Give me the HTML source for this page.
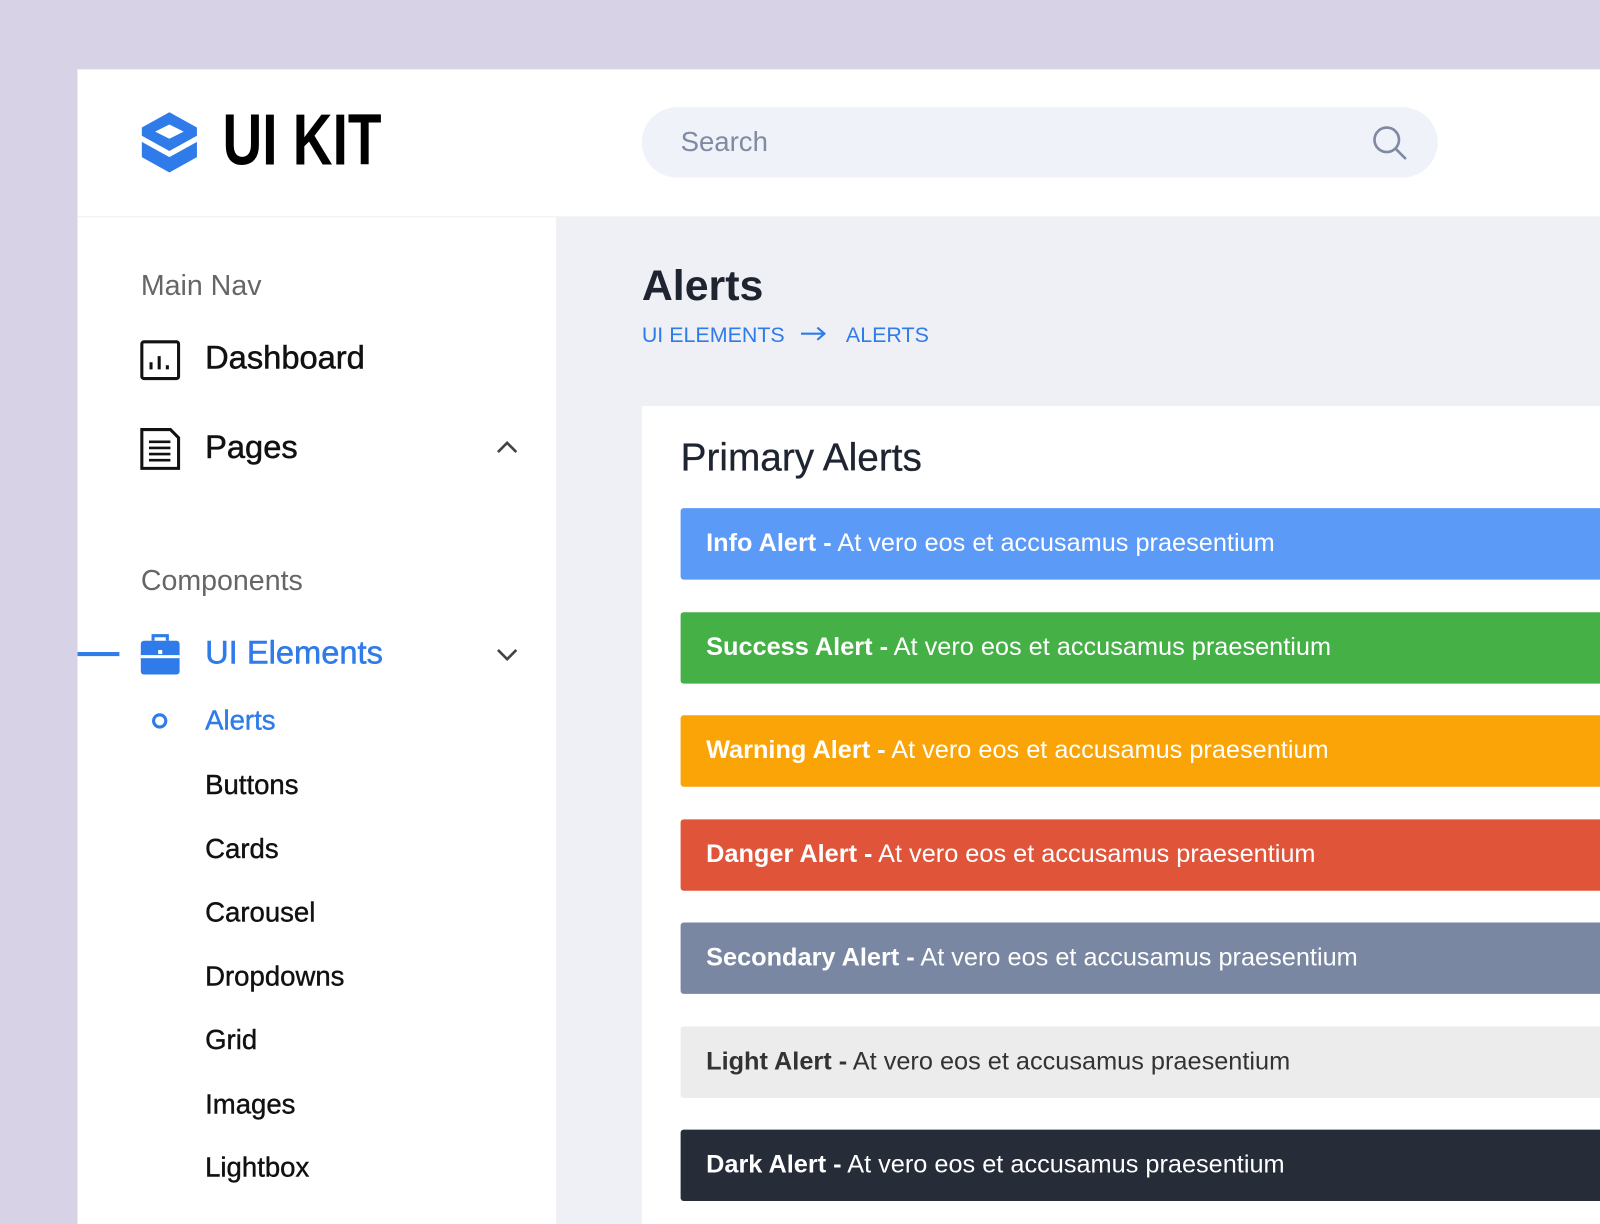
<!DOCTYPE html>
<html><head><meta charset="utf-8"><style>
*{margin:0;padding:0;box-sizing:border-box}
body{width:1600px;height:1200px;background:#d7d2e6;font-family:"Liberation Sans",sans-serif;position:relative;overflow:hidden}
#w{position:absolute;left:0;top:0;width:1600px;height:1200px;transform:scale(1.0204);transform-origin:0 0}
.abs{position:absolute}
.panel{left:76px;top:68px;width:1524px;height:1132px;background:#eef0f5}
.side{left:76px;top:68px;width:469px;height:1132px;background:#fff}
.head{left:545px;top:68px;width:1055px;height:144px;background:#fff}
.hline{left:76px;top:212px;width:469px;height:1px;background:#eceef2}
.t{position:absolute;white-space:nowrap}
.m{-webkit-text-stroke:0.5px currentColor}
.alert{position:absolute;left:667px;width:940px;height:70px;border-radius:3px;color:#fff;font-size:24.8px;line-height:70px;padding-left:25px}
.alert b{font-weight:bold}
.sub{font-size:27px;color:#111;left:201px;-webkit-text-stroke:0.4px #111}
</style></head><body><div id="w">
<div class="abs panel"></div>
<div class="abs side"></div>
<div class="abs head"></div>
<div class="abs hline"></div>
<svg class="abs" style="left:137px;top:108px" width="58" height="64" viewBox="0 0 58 64">
<path d="M29 2 L56 17 L56 25 L29 40 L2 25 L2 17 Z M29 14 L15 21 L29 28 L43 21 Z" fill="#2f7bea" fill-rule="evenodd"/>
<path d="M2 31 L29 46 L56 31 L56 46 L29 61 L2 46 Z" fill="#2f7bea"/>
</svg>
<div class="t" style="left:218px;top:98px;font-weight:bold;font-size:71px;line-height:80px;color:#000;transform:scaleX(0.76);transform-origin:left">UI KIT</div>
<div class="abs" style="left:629px;top:105px;width:780px;height:69px;border-radius:35px;background:#eff2f8"></div>
<div class="t" style="left:667px;top:124px;font-size:27px;color:#7f8aa3">Search</div>
<svg class="abs" style="left:1344px;top:122px" width="36" height="36" viewBox="0 0 36 36"><circle cx="15" cy="15" r="12" fill="none" stroke="#7f8aa3" stroke-width="2.6"/><path d="M24 24 L33 33" stroke="#7f8aa3" stroke-width="2.6" stroke-linecap="round"/></svg>
<div class="t" style="left:138px;top:264px;font-size:28px;color:#666">Main Nav</div>
<svg class="abs" style="left:137px;top:333px" width="40" height="40" viewBox="0 0 40 40"><rect x="2" y="2" width="36" height="36" rx="2" fill="none" stroke="#111" stroke-width="3"/><path d="M11 22v7M19 16v13M27 25v4" stroke="#111" stroke-width="3"/></svg>
<div class="t m" style="left:201px;top:332px;font-size:32px;color:#111">Dashboard</div>
<svg class="abs" style="left:137px;top:419px" width="40" height="42" viewBox="0 0 40 42"><path d="M2 2 H30 L38 10 V40 H2 Z" fill="none" stroke="#111" stroke-width="3"/><path d="M9 14h21M9 20h21M9 26h21M9 32h21" stroke="#111" stroke-width="2.6"/></svg>
<div class="t m" style="left:201px;top:420px;font-size:32px;color:#111">Pages</div>
<svg class="abs" style="left:486px;top:430px" width="22" height="16"><path d="M2 13 L11 4 L20 13" fill="none" stroke="#444" stroke-width="2.6"/></svg>
<div class="t" style="left:138px;top:553px;font-size:28px;color:#666">Components</div>
<div class="abs" style="left:76px;top:639px;width:41px;height:4px;background:#2f7bea"></div>
<svg class="abs" style="left:137px;top:620px" width="40" height="42" viewBox="0 0 40 42"><path d="M13 8 V3 H27 V8" fill="none" stroke="#2f7bea" stroke-width="3"/><rect x="1" y="8" width="38" height="33" rx="3" fill="#2f7bea"/><rect x="1" y="22" width="38" height="3" fill="#fff"/><rect x="18" y="17" width="4" height="4" fill="#fff"/></svg>
<div class="t m" style="left:201px;top:621px;font-size:32px;color:#2f7bea">UI Elements</div>
<svg class="abs" style="left:486px;top:634px" width="22" height="16"><path d="M2 3 L11 12 L20 3" fill="none" stroke="#444" stroke-width="2.6"/></svg>
<div class="abs" style="left:149px;top:699px;width:15px;height:15px;border:3.5px solid #2f7bea;border-radius:50%"></div>
<div class="t sub" style="top:691px;color:#2f7bea;-webkit-text-stroke:0.4px #2f7bea">Alerts</div>
<div class="t sub" style="top:754px">Buttons</div>
<div class="t sub" style="top:817px">Cards</div>
<div class="t sub" style="top:879px">Carousel</div>
<div class="t sub" style="top:942px">Dropdowns</div>
<div class="t sub" style="top:1004px">Grid</div>
<div class="t sub" style="top:1067px">Images</div>
<div class="t sub" style="top:1129px">Lightbox</div>
<div class="t" style="left:629px;top:256px;font-size:42px;font-weight:bold;color:#1e2430">Alerts</div>
<div class="t" style="left:629px;top:317px;font-size:21px;color:#2f7bea">UI ELEMENTS</div>
<svg class="abs" style="left:784px;top:319px" width="26" height="16"><path d="M1 8 H24 M17 2 L24 8 L17 14" fill="none" stroke="#2f7bea" stroke-width="2"/></svg>
<div class="t" style="left:829px;top:317px;font-size:21px;color:#2f7bea">ALERTS</div>
<div class="abs" style="left:629px;top:398px;width:971px;height:802px;background:#fff"></div>
<div class="t m" style="left:667px;top:428px;font-size:38px;color:#1e2430;-webkit-text-stroke:0.3px #1e2430">Primary Alerts</div>
<div class="alert" style="top:498px;background:#5b9af7"><b>Info Alert -</b> At vero eos et accusamus praesentium</div>
<div class="alert" style="top:600px;background:#44b046"><b>Success Alert -</b> At vero eos et accusamus praesentium</div>
<div class="alert" style="top:701px;background:#fba407"><b>Warning Alert -</b> At vero eos et accusamus praesentium</div>
<div class="alert" style="top:803px;background:#e0553a"><b>Danger Alert -</b> At vero eos et accusamus praesentium</div>
<div class="alert" style="top:904px;background:#7a87a2"><b>Secondary Alert -</b> At vero eos et accusamus praesentium</div>
<div class="alert" style="top:1006px;background:#ececec;color:#333"><b>Light Alert -</b> At vero eos et accusamus praesentium</div>
<div class="alert" style="top:1107px;background:#262c38"><b>Dark Alert -</b> At vero eos et accusamus praesentium</div>
</div></body></html>
